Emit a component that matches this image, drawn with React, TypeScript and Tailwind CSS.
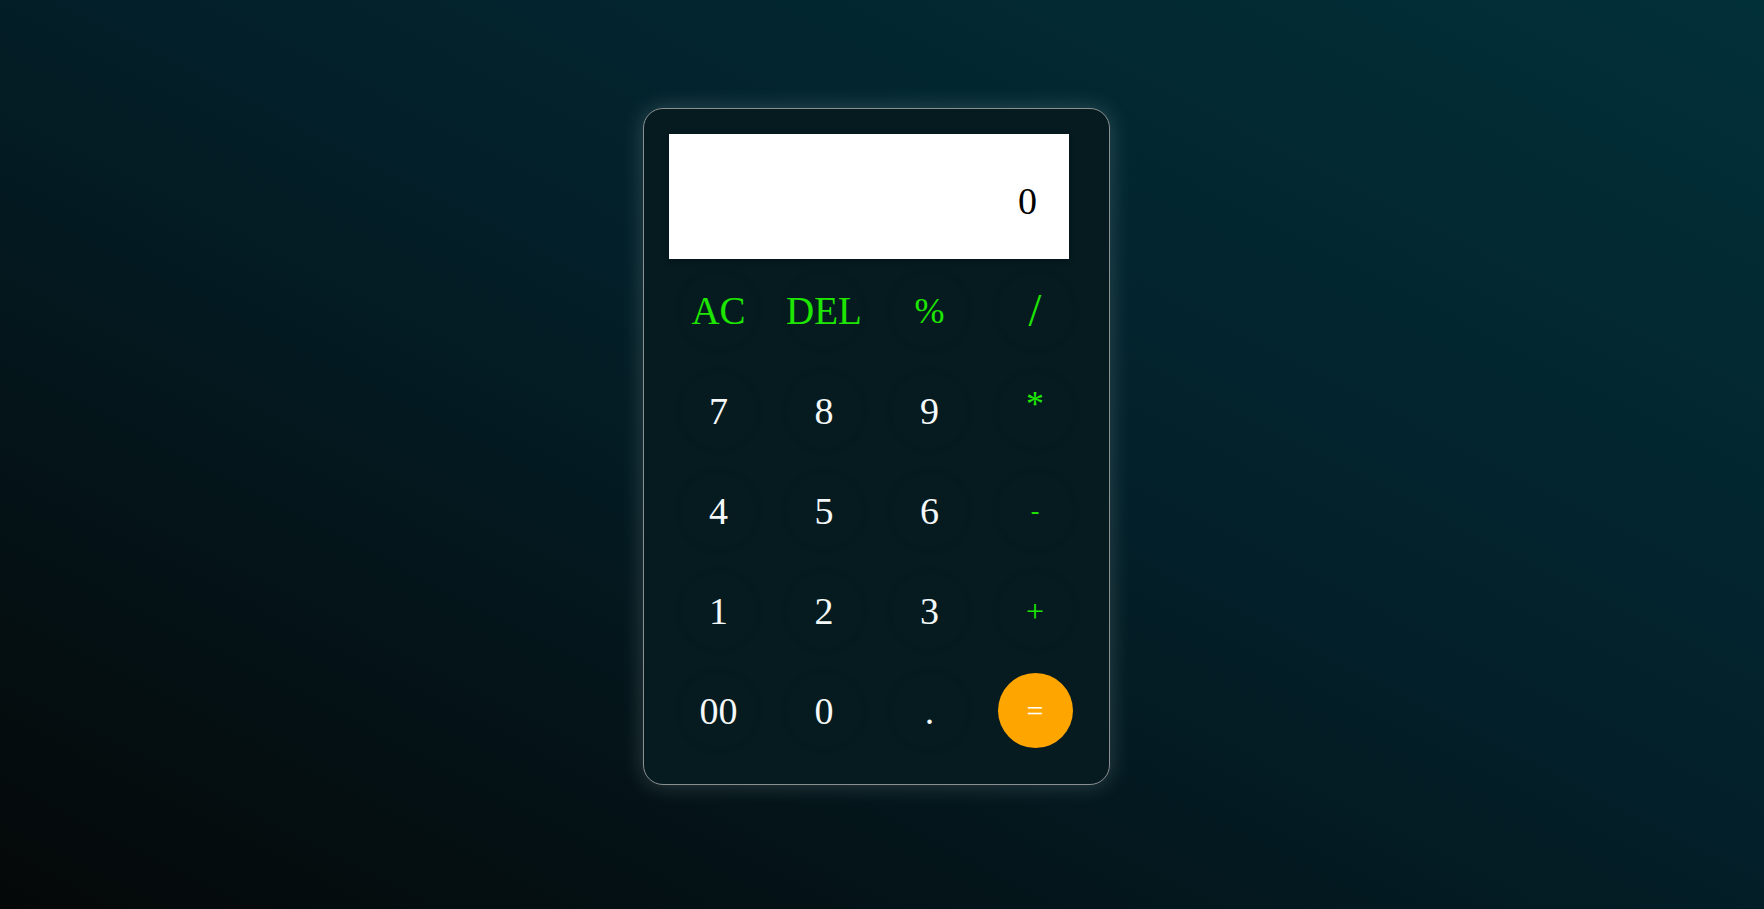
const keys: { label: string; kind: "op" | "num" | "eq"; size?: string }[] = [
    { label: "AC", kind: "op" },
    { label: "DEL", kind: "op" },
    { label: "%", kind: "op", size: "text-[36px]" },
    { label: "/", kind: "op", size: "text-[46px]" },
    { label: "7", kind: "num" },
    { label: "8", kind: "num" },
    { label: "9", kind: "num" },
    { label: "*", kind: "op", size: "text-[36px] pb-[14px]" },
    { label: "4", kind: "num" },
    { label: "5", kind: "num" },
    { label: "6", kind: "num" },
    { label: "-", kind: "op", size: "text-[26px]" },
    { label: "1", kind: "num" },
    { label: "2", kind: "num" },
    { label: "3", kind: "num" },
    { label: "+", kind: "op", size: "text-[32px]" },
    { label: "00", kind: "num" },
    { label: "0", kind: "num" },
    { label: ".", kind: "num" },
    { label: "=", kind: "eq" },
];

const App = () => {
    return (
        <div className="min-h-screen w-full bg-[linear-gradient(to_top_right,#050808,#03202a_55%,#023039)] flex justify-center pt-[108px] font-['Liberation_Serif',serif]">
            <div className="mr-[11px] w-[467px] h-[677px] rounded-[20px] border border-[#8a8f90] bg-[#051b20] shadow-[0_0_22px_rgba(200,220,220,0.22)] pt-[25px] px-[25px]">
                <div className="w-[400px] h-[125px] bg-white flex items-center justify-end pr-[32px] pt-[10px] text-[38px] text-black shadow-[0_2px_6px_rgba(0,0,0,0.25)]">
                    0
                </div>
                <div className="grid grid-cols-[repeat(4,75px)] gap-x-[30.5px] gap-y-[25px] mt-[14px] ml-[12px]">
                    {keys.map((k) => (
                        <button
                            key={k.label}
                            className={
                                k.kind === "eq"
                                    ? "w-[75px] h-[75px] rounded-full bg-[#ffa500] text-white text-[30px] leading-none flex items-center justify-center"
                                    : k.kind === "op"
                                      ? `w-[75px] h-[75px] rounded-full bg-[#051b20] shadow-[0_0_10px_rgba(0,0,0,0.07)] text-[#1ee600] ${k.size ?? "text-[39px]"} leading-none flex items-center justify-center`
                                      : "w-[75px] h-[75px] rounded-full bg-[#051b20] shadow-[0_0_10px_rgba(0,0,0,0.07)] text-[#f4f8f8] text-[38px] leading-none flex items-center justify-center"
                            }
                        >
                            {k.label}
                        </button>
                    ))}
                </div>
            </div>
        </div>
    );
};

export default App;
